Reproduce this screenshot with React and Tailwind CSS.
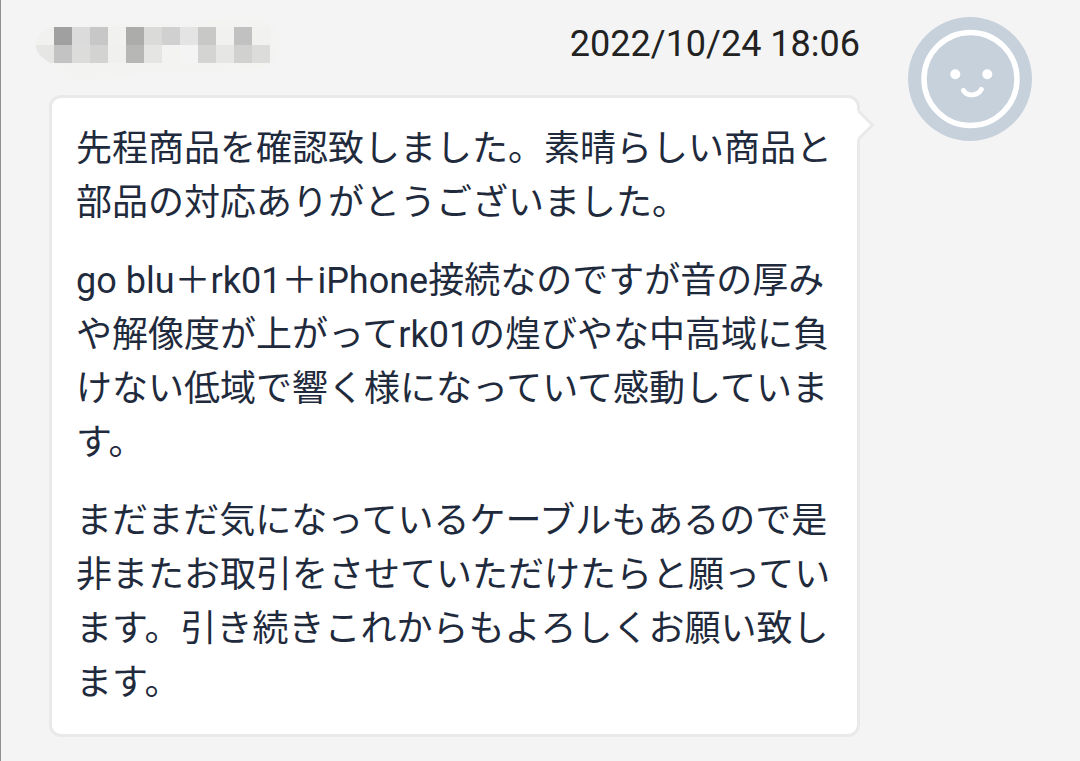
const paragraphs = [
  "先程商品を確認致しました。素晴らしい商品と部品の対応ありがとうございました。",
  "go blu＋rk01＋iPhone接続なのですが音の厚みや解像度が上がってrk01の煌びやな中高域に負けない低域で響く様になっていて感動しています。",
  "まだまだ気になっているケーブルもあるので是非またお取引をさせていただけたらと願っています。引き続きこれからもよろしくお願い致します。",
];

const mosaic = [
  ["#f1f1ef", "#a0a0a0", "#dbdbdb", "#c7c7c7", "#f1f1f0", "#acacaa", "#dadad8", "#d0d0d0", "#e4e4e4", "#c8c8c6", "#f1f1f0", "#c1c1c1", "#f1f1ef"],
  ["#e6e6e4", "#c3c3c3", "#dcdcda", "#d3d3d1", "#f0f0ee", "#b7b7b5", "#e5e5e3", "#f3f3f2", "#f4f4f4", "#d4d4d2", "#e6e6e4", "#d1d1cf", "#dcdcda"],
];

function MaskedName() {
  return (
    <svg className="h-16 w-[248px] shrink-0" viewBox="0 0 248 64" role="img" aria-label="Hidden user name">
      <defs>
        <clipPath id="brush">
          <path d="M18 10H235V46H14C8 42 0 37 0 29C0 19 7 10 18 10Z" />
        </clipPath>
      </defs>
      <path
        d="M14 10C80 7 170 6 205 1C230-1 244 8 244 25C242 39 238 50 224 51C180 58 140 55 100 57C70 64 40 64 32 62C25 58 24 52 14 46Z"
        fill="#f3f3f1"
      />
      <g clipPath="url(#brush)" shapeRendering="crispEdges">
        {mosaic.map((row, y) =>
          row.map((color, x) => (
            <rect key={`${x}-${y}`} x={x * 18} y={10 + y * 18} width="18" height="18" fill={color} />
          ))
        )}
      </g>
    </svg>
  );
}

function Avatar() {
  return (
    <svg className="size-[124px] shrink-0" viewBox="0 0 124 124" role="img" aria-label="Avatar">
      <circle cx="62" cy="62" r="62" fill="#c7d1dc" />
      <circle cx="62.5" cy="62" r="46.5" fill="none" stroke="#fff" strokeWidth="5.5" />
      <circle cx="47.3" cy="57.3" r="5" fill="#fff" />
      <circle cx="79.3" cy="57.3" r="5" fill="#fff" />
      <path d="M55.5 73.5C59 79.5 69 79.5 73.3 72.5" fill="none" stroke="#fff" strokeWidth="5" strokeLinecap="round" />
    </svg>
  );
}

function Bubble({ children }) {
  return (
    <div className="relative rounded-xl border-3 border-[#e9e9e9] bg-white p-6">
      {children}
      <svg className="absolute top-3 -right-5 h-8 w-5" viewBox="0 0 20 32" aria-hidden="true">
        <path d="M0 0L15.5 15L0 30Z" fill="#fff" />
        <path d="M1.5 1L15.5 15L1.5 29" fill="none" stroke="#e9e9e9" strokeWidth="3" />
      </svg>
    </div>
  );
}

export default function App() {
  return (
    <main className="min-h-screen border-l border-[#8e8e8e] bg-[#f4f4f4] font-[Roboto,'Noto_Sans_CJK_JP',sans-serif] text-4xl">
      <article className="flex items-start gap-12 px-12 pt-[17px] pb-4">
        <div className="min-w-0 flex-1">
          <header className="mb-3.5 -ml-[13px] flex items-start justify-between">
            <MaskedName />
            <time className="leading-[54px] whitespace-nowrap text-[#222]" dateTime="2022-10-24T18:06">
              2022/10/24 18:06
            </time>
          </header>
          <Bubble>
            <div className="space-y-6 leading-[54px] text-[#1f2b3d]" lang="ja">
              {paragraphs.map((text) => (
                <p key={text}>{text}</p>
              ))}
            </div>
          </Bubble>
        </div>
        <Avatar />
      </article>
    </main>
  );
}
